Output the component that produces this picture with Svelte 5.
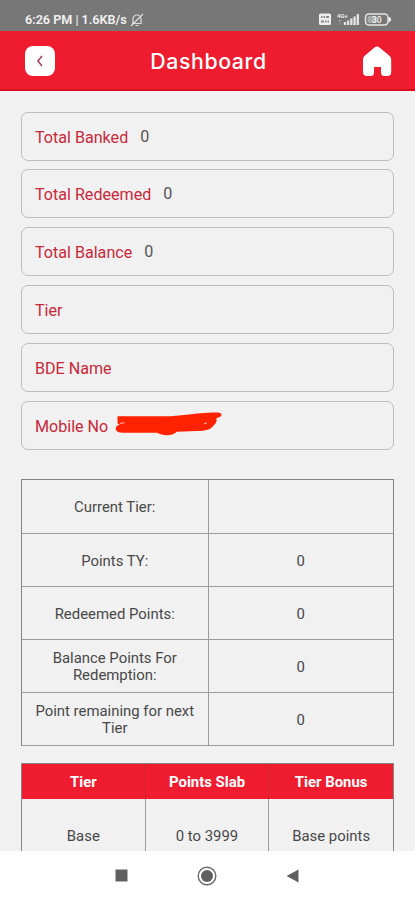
<script lang="ts">
  const fields = [
    { label: 'Total Banked', value: '0' },
    { label: 'Total Redeemed', value: '0' },
    { label: 'Total Balance', value: '0' },
    { label: 'Tier', value: '' },
    { label: 'BDE Name', value: '' },
    { label: 'Mobile No', value: '', hidden: true }
  ];

  const summary = [
    { label: 'Current Tier:', value: '' },
    { label: 'Points TY:', value: '0' },
    { label: 'Redeemed Points:', value: '0' },
    { label: 'Balance Points For Redemption:', value: '0' },
    { label: 'Point remaining for next Tier', value: '0' }
  ];

  const tiers = [{ name: 'Base', slab: '0 to 3999', bonus: 'Base points' }];
</script>

<div class="screen">
  <div class="status">
    <span class="clock">6:26 PM <i>|</i> 1.6KB/s</span>
    <svg class="mute" width="14" height="14" viewBox="0 0 14 14">
      <path d="M3 10.500V6a4 4 0 0 1 8 0v4.500H2M5.500 12.500h3M1 13 13 1" />
    </svg>
    <svg class="signals" width="74" height="15" viewBox="0 0 74 15">
      <rect x="1" y="1.500" width="12" height="11.500" rx="1.500" fill="#eee" />
      <path d="M3 5h1.500M5.500 5h1.500M8 5h3M3 9.500h3M7 9.500h1.500M9.500 9.500H11" stroke="#888" stroke-width="2" />
      <text x="19" y="6" font-size="6" font-weight="700" fill="#eee">4G+</text>
      <path d="M20 8.500h4M22 8.500v4" stroke="#999" />
      <path d="M27 13v-3M30.200 13V8.500M33.400 13V6.500M36.600 13V4.500M39.800 13V2" stroke="#e4e4e4" stroke-width="2.300" />
      <rect x="47.500" y="2" width="22.500" height="11" rx="3.500" fill="none" stroke="#e6e6e6" stroke-width="1.500" />
      <rect x="49.500" y="4" width="9" height="7" rx="1.500" fill="#aaa" />
      <path d="M71 5.500h.8l1 2-1 2H71z" fill="#eee" stroke="#eee" />
      <text x="54" y="10.500" font-size="8.500" font-weight="500" fill="#f4f4f4">30</text>
    </svg>
  </div>

  <header>
    <button class="back" aria-label="Back">
      <svg width="30" height="30" viewBox="0 0 30 30">
        <path d="m17 10-4 5 4 5" />
      </svg>
    </button>
    <h1>Dashboard</h1>
    <svg class="home" width="30" height="31" viewBox="0 0 30 31">
      <path d="M12.500 1.400q2.500-2 5 0l9.700 8q2 1.700 2 4V26q0 4-4 4h-2.700q-3.500 0-3.500-3.500V21h-7v5.500Q12 30 8.500 30H5q-4 0-4-4V13.400q0-2.300 2-4z" />
    </svg>
  </header>

  <main>
    <div class="fields">
      {#each fields as field}
        <div class="field">
          <span class="label">{field.label}</span>
          {#if field.value}<span class="value">{field.value}</span>{/if}
          {#if field.hidden}
            <svg class="scribble" width="108" height="24" viewBox="0 0 108 24">
              <path d="M2.500 4.200h50C70 4 76 1 102 .5c5-.5 6 3.500 2 4.700l-3 1.300q2 3-2 6.500-3 5-11 5.700l-26 1c-5 4.500-14 4.500-20 1l-34 0Q1 20.500.7 17q-.2-3 4-4.500l-2.200-1z" />
              <path class="gap" d="M5 11.300l4.500-.5M89 11.800l3-1" />
            </svg>
          {/if}
        </div>
      {/each}
    </div>

    <div class="summary">
      {#each summary as row}
        <div class="cell"><span>{row.label}</span></div>
        <div class="cell"><span>{row.value}</span></div>
      {/each}
    </div>

    <div class="tiers">
      <div class="head">Tier</div>
      <div class="head">Points Slab</div>
      <div class="head">Tier Bonus</div>
      {#each tiers as tier}
        <div class="body">{tier.name}</div>
        <div class="body">{tier.slab}</div>
        <div class="body">{tier.bonus}</div>
      {/each}
    </div>
  </main>

  <nav>
    <svg width="13" height="13" viewBox="0 0 13 13"><path d="M.5.500h12v12H.5z" /></svg>
    <svg width="20" height="20" viewBox="0 0 20 20">
      <circle cx="10" cy="10" r="8.800" fill="none" stroke="#696969" stroke-width="1.400" />
      <circle cx="10" cy="10" r="6" />
    </svg>
    <svg width="13" height="14" viewBox="0 0 13 14"><path d="M12.500.500v13L.5 7z" /></svg>
  </nav>
</div>

<style>
  :global(body) { background: #f1f1f1; }
  .screen {
    height: 900px;
    display: flex;
    flex-direction: column;
    overflow: hidden;
    background: #f1f1f1;
    color: #484848;
    font-family: Roboto, sans-serif;
  }
  .status {
    flex: none;
    height: 31px;
    box-sizing: border-box;
    padding: 8px 23px 0 25px;
    display: flex;
    align-items: center;
    background: #777;
    color: #f2f2f2;
  }
  .clock { font-size: 12.6px; font-weight: 600; white-space: nowrap; }
  .clock i { font-style: normal; font-weight: 400; }
  .mute { margin-left: 3px; fill: none; stroke: #ddd; stroke-width: 1.2; }
  .signals { margin-left: auto; }

  header {
    flex: none;
    height: 60px;
    box-sizing: border-box;
    padding: 2px 23px 0 25px;
    display: flex;
    align-items: center;
    justify-content: space-between;
    background: #ee1c2e;
    border-bottom: 2px solid #d90f1c;
  }
  .back { width: 30px; height: 30px; padding: 0; border: 0; border-radius: 8px; background: #fff; }
  .back svg { display: block; fill: none; stroke: #a8435c; stroke-width: 1.6; }
  h1 {
    margin: 0;
    color: #fff;
    font: 500 21.3px/30px Inter, sans-serif;
    letter-spacing: .6px;
  }
  .home { fill: #fff; }

  main { flex: 1; min-height: 0; overflow: hidden; padding: 20.5px 21px 0; }
  .fields { display: flex; flex-direction: column; gap: 8.9px; margin-bottom: 29px; }
  .field {
    height: 49px;
    box-sizing: border-box;
    padding: 2px 13px 0;
    display: flex;
    align-items: center;
    border: 1.5px solid #bdbdbd;
    border-radius: 7px;
    font-size: 16.1px;
  }
  .label { color: #c9283b; }
  .value { margin: -2px 0 0 12px; color: #555; }
  .scribble { margin: -5px 0 0 7px; fill: #ff2200; }
  .gap { stroke: #f5c4ba; stroke-width: 1; }

  .summary {
    display: grid;
    grid-template-columns: 186.5px 1fr;
    grid-template-rows: 54px repeat(4, 53px);
    width: 373px;
    box-sizing: border-box;
    border: 1px solid #858585;
    border-width: 1px 1px 0 1px;
    margin-bottom: 17px;
  }
  .cell {
    display: flex;
    align-items: center;
    justify-content: center;
    padding: 3px 8px 0;
    border-bottom: 1px solid #9c9c9c;
    font-size: 14.9px;
    line-height: 17.5px;
    text-align: center;
  }
  .cell:nth-child(odd) { border-right: 1px solid #9c9c9c; }

  .tiers {
    display: grid;
    grid-template-columns: repeat(3, 1fr);
    grid-template-rows: 35px 75px;
    width: 373px;
    box-sizing: border-box;
    border: 1px solid #858585;
  }
  .head, .body { display: flex; align-items: center; justify-content: center; font-size: 14.9px; }
  .head { padding-top: 2px; background: #ee1c2e; color: #fff; font-weight: 700; }
  .body:nth-child(3n + 1), .body:nth-child(3n + 2) { border-right: 1px solid #9c9c9c; }
  .head:nth-child(1), .head:nth-child(2) { border-right: 1px solid #d32432; }

  nav {
    flex: none;
    height: 49px;
    box-sizing: border-box;
    padding-left: 115px;
    display: flex;
    align-items: center;
    gap: 69px;
    background: #fff;
    fill: #606060;
  }
</style>
